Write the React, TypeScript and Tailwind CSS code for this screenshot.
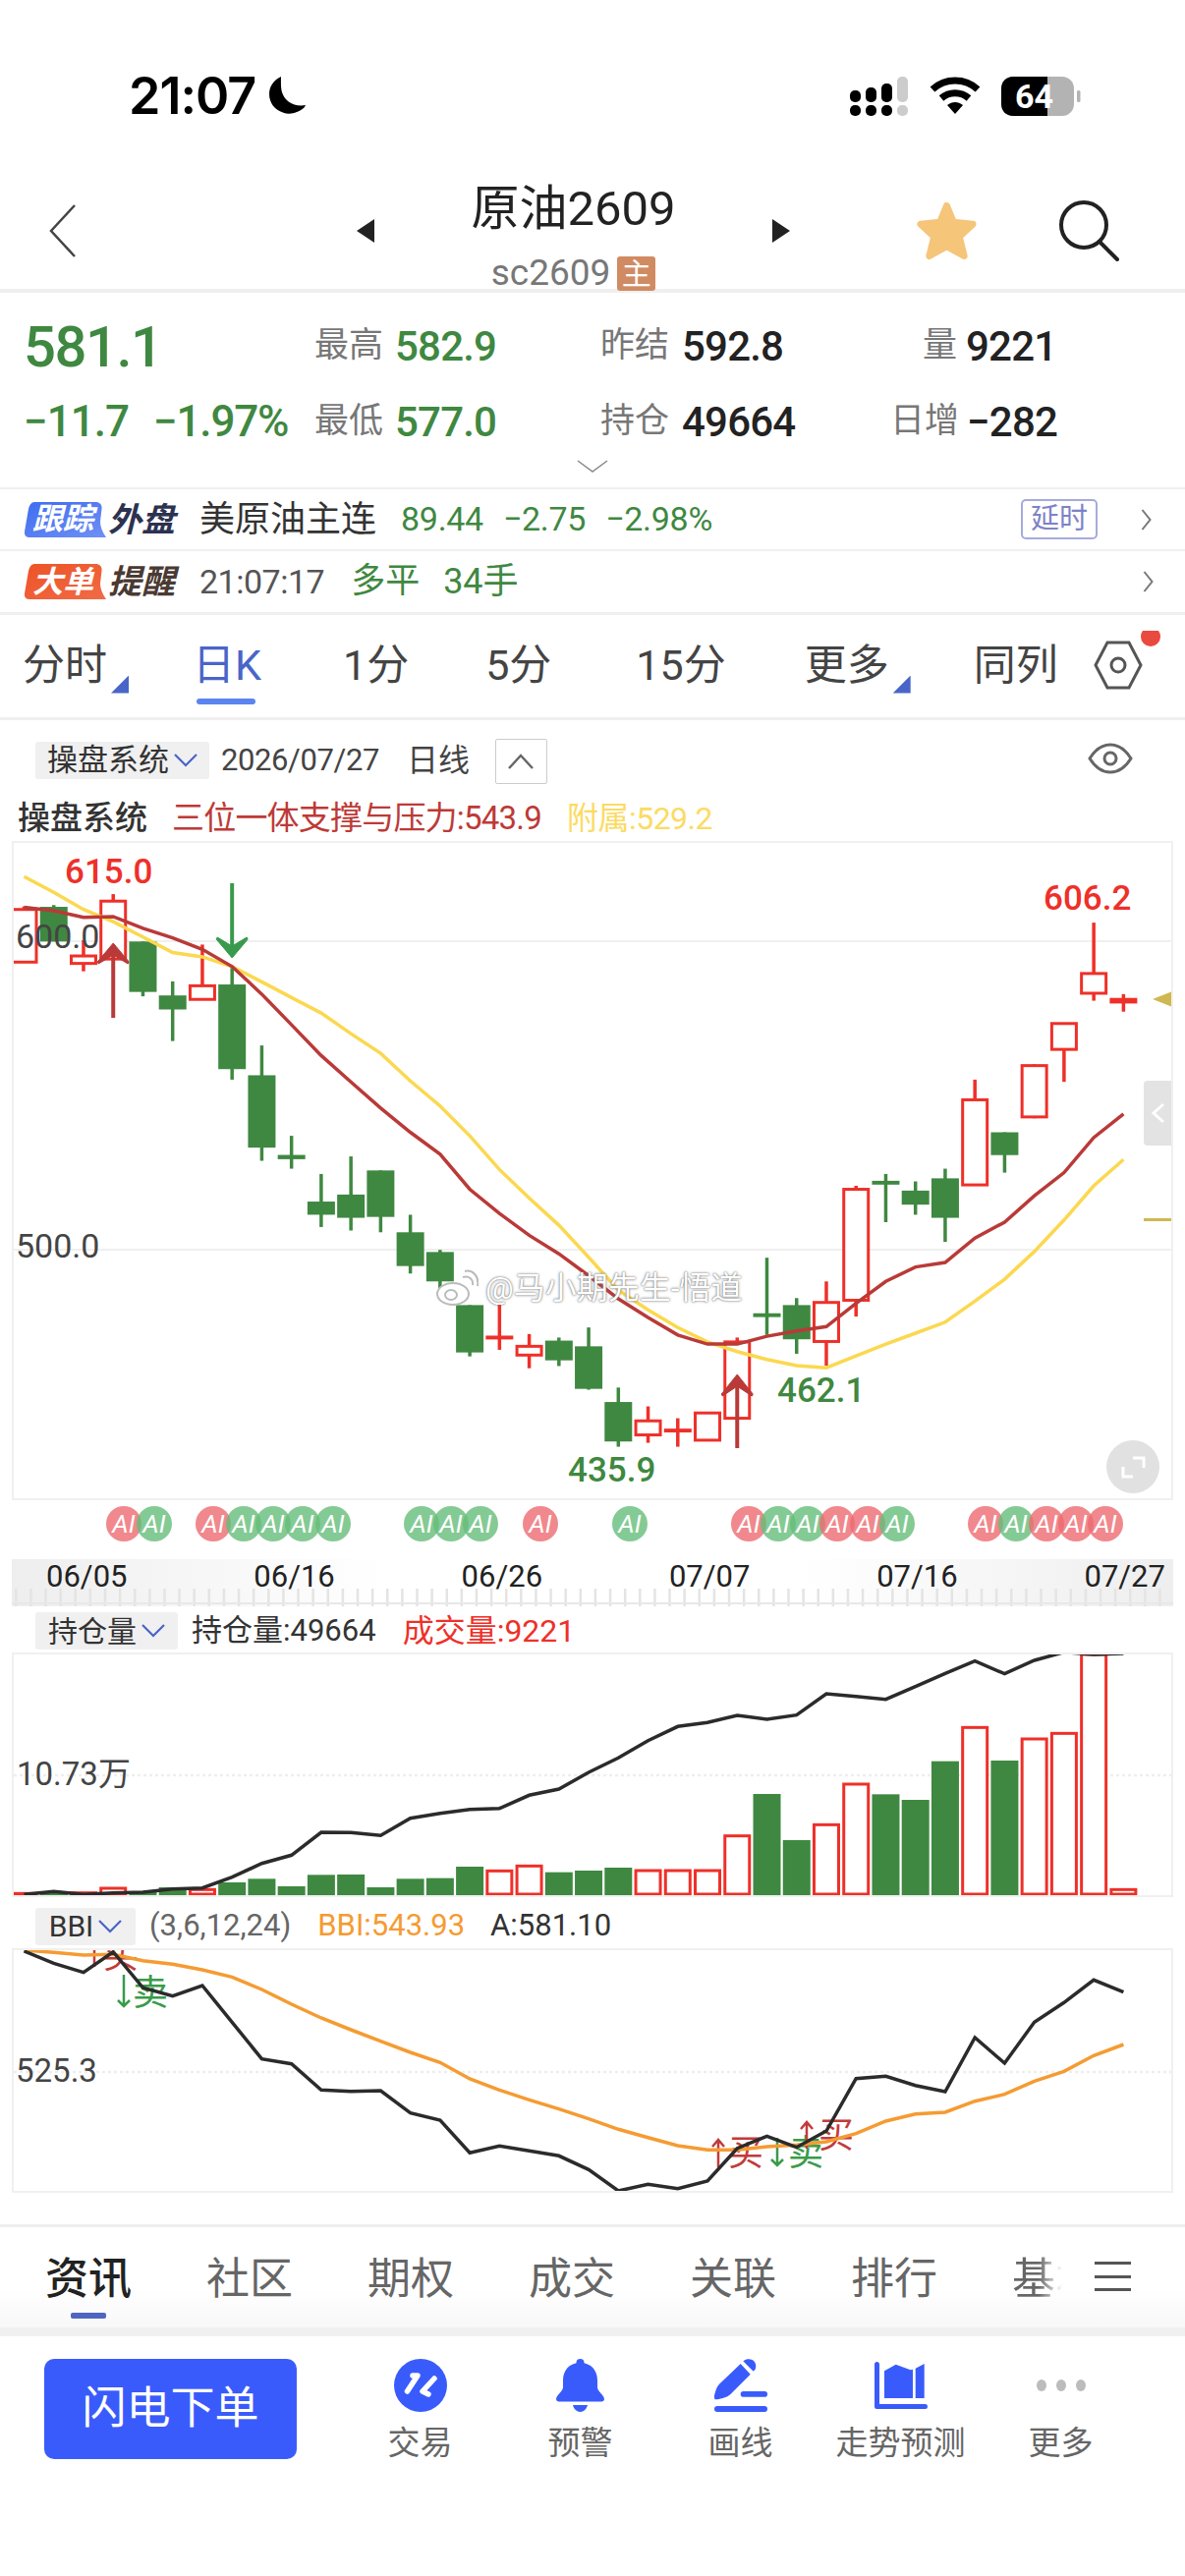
import { ReactNode } from "react";

const RED = "#ee3029";
const GREEN = "#3f8841";

// candle centre on the page
const cx = (i: number) => 24.5 + 30.24 * i;
const py = (v: number) => 840 + v / 2.24;
const vy = (v: number) => 1530 + v / 3;
const by = (v: number) => 1930 + v / 3;

// [high, top, bottom, low, up?]
const candles: [number, number, number, number, boolean][] = [
  [185, 192, 312, 312, true],
  [182, 186, 265, 265, false],
  [262, 298, 315, 333, true],
  [157, 173, 305, 305, true],
  [265, 265, 380, 390, false],
  [356, 388, 420, 492, false],
  [272, 366, 397, 397, true],
  [320, 363, 556, 580, false],
  [502, 570, 735, 765, false],
  [708, 755, 758, 783, false],
  [795, 858, 888, 916, false],
  [755, 842, 895, 924, false],
  [787, 787, 893, 928, false],
  [888, 928, 1005, 1022, false],
  [968, 973, 1040, 1058, false],
  [1094, 1094, 1202, 1211, false],
  [1090, 1167, 1169, 1196, true],
  [1160, 1188, 1208, 1238, true],
  [1168, 1175, 1220, 1233, false],
  [1145, 1188, 1285, 1287, false],
  [1282, 1315, 1405, 1417, false],
  [1325, 1358, 1390, 1408, true],
  [1352, 1379, 1381, 1417, true],
  [1340, 1340, 1402, 1402, true],
  [1168, 1178, 1352, 1352, true],
  [986, 1116, 1118, 1162, false],
  [1078, 1094, 1172, 1205, false],
  [1040, 1088, 1177, 1232, true],
  [822, 830, 1083, 1120, true],
  [795, 814, 816, 905, false],
  [812, 833, 865, 888, false],
  [783, 805, 895, 950, false],
  [580, 626, 820, 822, true],
  [700, 700, 752, 792, false],
  [545, 548, 665, 668, true],
  [452, 452, 511, 585, true],
  [222, 338, 383, 400, true],
  [385, 397, 403, 425, true],
];

const redLine = [187, 195, 210, 208, 235, 257, 283, 322, 385, 455, 525, 585, 645, 700, 750, 830, 885, 935, 977, 1027, 1080, 1122, 1162, 1183, 1183, 1165, 1153, 1143, 1090, 1040, 1007, 997, 941, 905, 845, 792, 712, 658];
const yellowLine = [117, 153, 192, 220, 255, 290, 300, 322, 357, 393, 428, 475, 520, 583, 640, 708, 785, 850, 912, 985, 1060, 1105, 1145, 1178, 1200, 1218, 1232, 1237, 1210, 1183, 1158, 1133, 1085, 1035, 972, 900, 822, 762];
const volTops = [1192, 1188, 1190, 1176, 1185, 1173, 1180, 1158, 1147, 1170, 1135, 1134, 1173, 1147, 1145, 1110, 1123, 1108, 1127, 1122, 1113, 1122, 1122, 1122, 1016, 888, 1029, 982, 858, 889, 906, 788, 685, 786, 720, 703, 462, 1180];
const oiLine = [1195, 1186, 1195, 1190, 1188, 1178, 1175, 1142, 1100, 1075, 1005, 1006, 1015, 962, 947, 935, 932, 892, 873, 822, 778, 725, 682, 670, 648, 660, 647, 582, 590, 599, 560, 520, 482, 521, 480, 455, 462, 459];
const bbiBlack = [168, 205, 233, 170, 280, 305, 273, 385, 497, 512, 592, 596, 594, 662, 684, 784, 763, 778, 793, 835, 900, 880, 893, 870, 770, 733, 767, 717, 557, 550, 578, 597, 432, 510, 385, 325, 256, 293];
const bbiOrange = [165, 172, 180, 178, 197, 208, 225, 247, 285, 330, 372, 408, 443, 477, 508, 558, 592, 622, 650, 680, 712, 737, 762, 775, 775, 765, 760, 750, 725, 687, 665, 660, 626, 605, 565, 535, 487, 453];

const pts = (vals: number[], f: (v: number) => number) =>
  vals.map((v, i) => `${cx(i).toFixed(1)},${f(v).toFixed(1)}`).join(" ");

const aiBadges: [number, boolean][] = [
  [126, true], [157, false], [217, true], [248, false], [278, false], [308, false], [339, false],
  [429, false], [459, false], [489, false], [550, true], [641, false],
  [762, true], [792, false], [822, false], [852, true], [883, true], [913, false],
  [1003, true], [1034, false], [1065, true], [1095, true], [1125, true],
];

const Arrow = ({ x, tail, tip, wing, color }: { x: number; tail: number; tip: number; wing: number; color: string }) => {
  const dir = tail > tip ? 1 : -1;
  return (
    <g fill={color} stroke={color}>
      <line x1={x} y1={tail} x2={x} y2={tip + dir * 4} strokeWidth="4" />
      <path d={`M${x} ${tip}L${x + 16} ${wing}L${x + 15} ${wing + dir * 2}L${x} ${tip + dir * 12}L${x - 15} ${wing + dir * 2}L${x - 16} ${wing}Z`} strokeWidth="1" />
    </g>
  );
};

const Chevron = ({ cls }: { cls: string }) => (
  <svg viewBox="0 0 12 24" className={cls} fill="none" stroke="#777" strokeWidth="2">
    <path d="M2 2L10 12L2 22" />
  </svg>
);

const DownV = () => (
  <svg viewBox="0 0 24 14" className="w-[24px] h-[14px]" fill="none" stroke="#4a63c8" strokeWidth="2.2">
    <path d="M1 1L12 12L23 1" />
  </svg>
);

const Dropdown = ({ label, w, size }: { label: string; w: string; size: string }) => (
  <div className={`h-[38px] ${w} ${size} rounded-[3px] bg-[#f0f0f0] flex items-center justify-center gap-[5px] text-[#333]`}>
    {label}
    <DownV />
  </div>
);

const Tab = ({ children, cls, tri }: { children: ReactNode; cls: string; tri?: boolean }) => (
  <div className={`relative flex items-center text-[43px] leading-none ${cls}`}>
    {children}
    {tri && <div className="absolute right-[-22px] bottom-[-7px] w-[18px] h-[18px] bg-[#4a65c8] [clip-path:polygon(100%_0,100%_100%,0_100%)]" />}
  </div>
);

const Logo = ({ tag, rest, from, to, id, restCls }: { tag: string; rest: string; from: string; to: string; id: string; restCls: string }) => (
  <div className="flex items-center">
    <div className="relative w-[83px] h-[36px] flex items-center justify-center">
      <svg viewBox="0 0 83 36" className="absolute inset-0 w-[83px] h-[36px]">
        <defs>
          <linearGradient id={id} x1="0" y1="0" x2="1" y2="1">
            <stop offset="0" stopColor={from} />
            <stop offset="1" stopColor={to} />
          </linearGradient>
        </defs>
        <path d="M10 0H72C77 0 79 3 78.500 7L77 20C77 25 79 30 83 36H5C1 36 -0.500 33 0 30L4 7C5 3 7 0 10 0Z" fill={`url(#${id})`} />
      </svg>
      <span className="relative pr-[5px] text-[31px] leading-none font-bold italic text-white">{tag}</span>
    </div>
    <span className={`ml-[2px] text-[34px] leading-none font-bold italic ${restCls}`}>{rest}</span>
  </div>
);

const NavItem = ({ icon, label }: { icon: ReactNode; label: string }) => (
  <div className="w-[163px] flex flex-col items-center">
    <div className="h-[54px] flex items-center">{icon}</div>
    <span className="mt-[12px] text-[33px] leading-[40px] text-[#666]">{label}</span>
  </div>
);

const App = () => {
  return (
    <div className="w-[1206px] h-[2622px] bg-white overflow-hidden font-[Roboto,'Noto_Sans_CJK_SC',sans-serif]">
      {/* status bar */}
      <div className="h-[170px] flex items-start pt-[77px] pl-[131px]">
        <span className="text-[52px] leading-[41px] font-semibold text-black tracking-[-1px] font-[Inter,sans-serif]">21:07</span>
        <svg viewBox="0 0 40 40" className="ml-[12px] w-[40px] h-[40px]" fill="#000">
          <path d="M14 1C4 6 0 15 3 25C6 35 19 42 30 37C34 35.500 38 33 39 30C27 32 18 26 15 17C13.500 11 14 5 14 1Z" />
        </svg>
        <svg viewBox="0 0 236 42" className="ml-[552px] w-[236px] h-[42px]">
          <g fill="#000">
            <rect x="1" y="15" width="11" height="12" rx="5" />
            <rect x="17" y="12" width="11" height="15" rx="5" />
            <rect x="33" y="8" width="11" height="19" rx="5" />
            <rect x="1" y="30" width="11" height="11" rx="5" />
            <rect x="17" y="30" width="11" height="11" rx="5" />
            <rect x="33" y="30" width="11" height="11" rx="5" />
          </g>
          <rect x="49" y="1" width="11" height="26" rx="5" fill="#ccc" />
          <rect x="49" y="30" width="11" height="11" rx="5" fill="#ccc" />
          <g fill="none" stroke="#000" strokeWidth="7">
            <path d="M85 14C98 2 118 2 131 14" />
            <path d="M94 23C102 16 114 16 122 23" />
          </g>
          <path d="M100 30C105 26 111 26 116 30L108 39Z" fill="#000" />
          <rect x="155" y="1" width="74" height="40" rx="12" fill="#b3b3b3" />
          <path d="M167 1H202V41H167C160 41 155 36 155 29V13C155 6 160 1 167 1Z" fill="#000" />
          <rect x="232" y="15" width="3.500" height="12" rx="1.500" fill="#b3b3b3" />
          <text x="169" y="33" fontSize="34" fontWeight="700" fill="#fff">64</text>
        </svg>
      </div>

      {/* title bar */}
      <div className="h-[128px] flex items-start border-b-4 border-[#efefef]">
        <svg viewBox="0 0 28 54" className="ml-[50px] mt-[38px] w-[28px] h-[54px]" fill="none" stroke="#444" strokeWidth="2.500">
          <path d="M26 1L2 27L26 53" />
        </svg>
        <svg viewBox="0 0 18 24" className="ml-[285px] mt-[53px] w-[18px] h-[24px]" fill="#222">
          <path d="M18 0V24L0 12Z" />
        </svg>
        <div className="w-[405px] flex flex-col items-center text-[#333]">
          <span className="mt-[18px] text-[49px] leading-[50px] text-[#222]">原油2609</span>
          <div className="mt-[22px] flex items-center">
            <span className="text-[37px] leading-[36px] text-[#777]">sc2609</span>
            <span className="ml-[7px] w-[39px] h-[35px] rounded-[3px] bg-[#d18b62] text-white text-[30px] leading-[35px] text-center">主</span>
          </div>
        </div>
        <svg viewBox="0 0 18 24" className="mt-[53px] w-[18px] h-[24px]" fill="#222">
          <path d="M0 0V24L18 12Z" />
        </svg>
        <svg viewBox="0 0 62 62" className="ml-[129px] mt-[34px] w-[61px] h-[62px]" fill="#f5c579" stroke="#f5c579" strokeWidth="7" strokeLinejoin="round">
          <path d="M31 5L38 22L58 24L44 37L49 57L31 47L13 57L18 37L4 24L24 22Z" />
        </svg>
        <svg viewBox="0 0 62 62" className="ml-[83px] mt-[34px] w-[62px] h-[62px]" fill="none" stroke="#222" strokeWidth="4">
          <circle cx="26" cy="25" r="23" />
          <path d="M42 42L60 60" strokeLinecap="round" />
        </svg>
      </div>

      {/* quote block */}
      <div className="relative h-[198px] pl-[24px]">
        <div className="h-[106px] pt-[3px] flex items-center">
          <span className="w-[296px] text-[58px] leading-none font-medium text-[#3f8841] tracking-[-1.500px]">581.1</span>
          <span className="w-[82px] text-[35px] text-[#777]">最高</span>
          <span className="w-[209px] text-[42px] font-medium text-[#3f8841] tracking-[-0.800px]">582.9</span>
          <span className="w-[83px] text-[35px] text-[#777]">昨结</span>
          <span className="w-[245px] text-[42px] font-medium text-[#222] tracking-[-0.800px]">592.8</span>
          <span className="w-[44px] text-[35px] text-[#777]">量</span>
          <span className="text-[42px] font-medium text-[#222] tracking-[-0.800px]">9221</span>
        </div>
        <div className="h-[50px] flex items-center">
          <span className="w-[132px] text-[44px] font-medium text-[#3f8841] tracking-[-1px]">−11.7</span>
          <span className="w-[164px] text-[44px] font-medium text-[#3f8841] tracking-[-1.200px]">−1.97%</span>
          <span className="w-[82px] text-[35px] text-[#777]">最低</span>
          <span className="w-[209px] text-[42px] font-medium text-[#3f8841] tracking-[-0.800px]">577.0</span>
          <span className="w-[83px] text-[35px] text-[#777]">持仓</span>
          <span className="w-[212px] text-[42px] font-medium text-[#222] tracking-[-0.800px]">49664</span>
          <span className="w-[78px] text-[35px] text-[#777]">日增</span>
          <span className="text-[42px] font-medium text-[#222] tracking-[-0.800px]">−282</span>
        </div>
        <svg viewBox="0 0 32 14" className="absolute left-[587px] top-[170px] w-[32px] h-[14px]" fill="none" stroke="#888" strokeWidth="1.500">
          <path d="M1 1L16 12L31 1" />
        </svg>
      </div>

      {/* follow rows */}
      <div className="h-[63px] border-t-2 border-[#f0f0f0] flex items-center pl-[25px]">
        <Logo tag="跟踪" rest="外盘" from="#3f6cf0" to="#6f90f5" id="gFollow" restCls="text-[#2c3250]" />
        <span className="ml-[25px] text-[36px] text-[#333]">美原油主连</span>
        <span className="ml-[25px] text-[34px] text-[#3f8841] tracking-[-0.300px]">89.44</span>
        <span className="ml-[20px] text-[34px] text-[#3f8841] tracking-[-0.300px]">−2.75</span>
        <span className="ml-[20px] text-[34px] text-[#3f8841] tracking-[-0.300px]">−2.98%</span>
        <div className="ml-[314px] w-[78px] h-[41px] rounded-[5px] border-2 border-[#a6abdc] text-[#7d82c8] text-[29px] leading-[37px] text-center">延时</div>
        <Chevron cls="ml-[43px] w-[13px] h-[24px]" />
      </div>
      <div className="h-[64px] border-t-2 border-[#f0f0f0] flex items-center pl-[25px]">
        <Logo tag="大单" rest="提醒" from="#ed5327" to="#f16b46" id="gAlert" restCls="text-[#4a3a33]" />
        <span className="ml-[25px] text-[34px] text-[#555] tracking-[-0.500px]">21:07:17</span>
        <span className="ml-[27px] text-[35px] text-[#3f8841]">多平</span>
        <span className="ml-[24px] text-[36px] text-[#3f8841]">34手</span>
        <Chevron cls="ml-[634px] w-[13px] h-[24px]" />
      </div>

      {/* period tabs */}
      <div className="relative h-[110px] border-t-[3px] border-b-[3px] border-[#f0f0f0] flex items-center pl-[23px] pb-[2px] text-[#444]">
        <Tab cls="" tri>分时</Tab>
        <Tab cls="ml-[87px] text-[#4a65c8]">日K</Tab>
        <Tab cls="ml-[83px]">1分</Tab>
        <Tab cls="ml-[78px]">5分</Tab>
        <Tab cls="ml-[86px]">15分</Tab>
        <Tab cls="ml-[80px]" tri>更多</Tab>
        <Tab cls="ml-[86px]">同列</Tab>
        <svg viewBox="0 0 72 70" className="ml-[35px] w-[72px] h-[70px]" fill="none" stroke="#555" strokeWidth="3">
          <path d="M15 12H37L49 35L37 58H15L3 35Z" />
          <circle cx="26" cy="35" r="7" />
          <circle cx="59" cy="6" r="10" fill="#e9493f" stroke="none" />
        </svg>
        <div className="absolute left-[200px] top-[85px] w-[60px] h-[6px] rounded-[3px] bg-[#5b84f0]" />
      </div>

      {/* chart toolbar */}
      <div className="h-[60px] flex items-end pl-[36px] gap-[12px] text-[#444]">
        <Dropdown label="操盘系统" w="w-[177px]" size="text-[31px]" />
        <span className="text-[31px] leading-[38px] tracking-[-0.400px]">2026/07/27</span>
        <span className="ml-[16px] text-[32px] leading-[38px]">日线</span>
        <div className="ml-[14px] mb-[-5px] w-[53px] h-[46px] border border-[#ccc] rounded-[2px] flex items-center justify-center">
          <svg viewBox="0 0 26 16" className="w-[26px] h-[16px]" fill="none" stroke="#666" strokeWidth="2.500">
            <path d="M1 15L13 2L25 15" />
          </svg>
        </div>
        <svg viewBox="0 0 46 32" className="ml-[538px] mb-[5px] w-[46px] h-[32px]" fill="none" stroke="#666" strokeWidth="3">
          <path d="M2 16C7 8 14 2 23 2C32 2 39 8 44 16C39 24 32 30 23 30C14 30 7 24 2 16Z" />
          <circle cx="23" cy="16" r="6" />
        </svg>
      </div>

      {/* indicator legend */}
      <div className="h-[63px] flex items-center pl-[18px] pt-[16px] text-[33px]">
        <span className="text-[#333] font-medium">操盘系统</span>
        <span className="ml-[25px] text-[#bd3a37] tracking-[-0.800px]">三位一体支撑与压力:543.9</span>
        <span className="ml-[26px] text-[32px] text-[#fbdb63] tracking-[-0.500px]">附属:529.2</span>
      </div>

      {/* price chart */}
      <div className="relative ml-[12px] w-[1182px] h-[671px] border-2 border-[#f0f0f0] overflow-hidden">
        <svg viewBox="14 858 1178 667" className="block w-[1178px] h-[667px]">
          <line x1="12" x2="1194" y1="958" y2="958" stroke="#f0f0f0" strokeWidth="2" />
          <line x1="12" x2="1194" y1="1272" y2="1272" stroke="#f0f0f0" strokeWidth="2" />
          {candles.map(([hi, top, bot, lo, up], i) => {
            const c = up ? RED : GREEN;
            const x = cx(i);
            const doji = bot - top < 8;
            return (
              <g key={i}>
                <line x1={x} x2={x} y1={py(hi)} y2={py(lo)} stroke={c} strokeWidth="3.500" />
                {doji ? (
                  <rect x={x - 14} y={py(top) - 1.500} width="28" height={Math.max(3, py(bot) - py(top) + 3)} fill={c} />
                ) : up ? (
                  <rect x={x - 12.500} y={py(top)} width="25" height={py(bot) - py(top)} fill="#fff" stroke={c} strokeWidth="3" />
                ) : (
                  <rect x={x - 14} y={py(top)} width="28" height={py(bot) - py(top)} fill={c} />
                )}
              </g>
            );
          })}
          <polyline points={pts(yellowLine, py)} fill="none" stroke="#fbd84f" strokeWidth="3.500" />
          <polyline points={pts(redLine, py)} fill="none" stroke="#b93a38" strokeWidth="3.500" />
          <Arrow x={cx(3)} tail={1036} tip={960} wing={979} color="#b93a38" />
          <Arrow x={cx(7)} tail={899} tip={975} wing={956} color="#3a9a4c" />
          <Arrow x={cx(24)} tail={1474} tip={1399} wing={1419} color="#b93a38" />
          <g fontSize="35" fontWeight="500">
            <text x="16" y="965" fontSize="34" fontWeight="400" fill="#444">600.0</text>
            <text x="16" y="1280" fontSize="34" fontWeight="400" fill="#444">500.0</text>
            <text x="66" y="899" fill={RED}>615.0</text>
            <text x="1062" y="926" fill={RED}>606.2</text>
            <text x="578" y="1508" fill={GREEN}>435.9</text>
            <text x="791" y="1427" fill={GREEN}>462.1</text>
          </g>
          <path d="M1193 1009V1025L1173 1017Z" fill="#cfb851" />
          <rect x="1164" y="1240" width="28" height="3" fill="#cfb851" />
          <path d="M1194 1100H1168Q1164 1100 1164 1104V1162Q1164 1166 1168 1166H1194Z" fill="#e3e3e3" />
          <path d="M1184 1124L1174 1133L1184 1142" fill="none" stroke="#fff" strokeWidth="3" />
          <ellipse cx="1153" cy="1493" rx="27" ry="27" fill="#e1e1e1" />
          <path d="M1153 1484H1164V1494M1153 1503H1143V1493" fill="none" stroke="#fff" strokeWidth="3" />
        </svg>
        {/* watermark */}
        <div className="absolute left-[429px] top-[433px] flex items-center gap-[7px] text-[32px] leading-[40px] text-white [text-shadow:0_0_3px_#777,0_0_1px_#777]">
          <svg viewBox="0 0 44 38" className="w-[44px] h-[38px]" fill="#fff" stroke="#bbb" strokeWidth="2">
            <ellipse cx="18" cy="25" rx="16" ry="11" />
            <ellipse cx="16" cy="26" rx="6" ry="5" fill="none" />
            <path d="M28 8C34 6 39 10 38 16M30 2C38 0 45 7 43 17" fill="none" />
          </svg>
          <span>@马小期先生-悟道</span>
        </div>
      </div>

      {/* AI markers */}
      <svg viewBox="0 1528 1206 46" className="block w-[1206px] h-[46px]">
        {aiBadges.map(([x, up], i) => (
          <g key={i}>
            <circle cx={x} cy="1552" r="18" fill={up ? "#ec6a70" : "#65bd7a"} opacity="0.8" />
            <text x={x} y="1561" textAnchor="middle" fontSize="26" fontStyle="italic" fill="#fff">AI</text>
          </g>
        ))}
      </svg>

      {/* date axis */}
      <div className="relative ml-[12px] mt-[14px] w-[1182px] h-[48px] bg-[linear-gradient(90deg,#eeeeee_0%,#ffffff_32%,#ffffff_68%,#eeeeee_100%)] flex justify-between pl-[35px] pr-[8px] text-[31px] leading-[36px] text-[#222]">
        <span>06/05</span>
        <span>06/16</span>
        <span>06/26</span>
        <span>07/07</span>
        <span>07/16</span>
        <span>07/27</span>
        <svg viewBox="0 0 1182 18" className="absolute left-0 bottom-0 w-[1182px] h-[18px]">
          {Array.from({ length: 78 }, (_, i) => (
            <rect key={i} x={3 + i * 15.12} y="0" width="2.500" height="18" fill="#e4e4e4" />
          ))}
          <rect x="0" y="14" width="1182" height="2" fill="#e8e8e8" />
        </svg>
      </div>

      {/* open interest */}
      <div className="h-[47px] flex items-center pl-[36px] pt-[3px]">
        <Dropdown label="持仓量" w="w-[145px]" size="text-[30px]" />
        <span className="ml-[14px] text-[31px] text-[#333]">持仓量:49664</span>
        <span className="ml-[27px] text-[32px] text-[#ee3029]">成交量:9221</span>
      </div>
      <div className="ml-[12px] w-[1182px] h-[249px] border-2 border-[#f0f0f0] overflow-hidden">
        <svg viewBox="14 1684 1178 245" className="block w-[1178px] h-[245px]">
          <line x1="14" x2="1192" y1="1807" y2="1807" stroke="#eee" strokeWidth="2.500" strokeDasharray="3 3" />
          {volTops.map((t, i) => {
            const x = cx(i);
            const up = candles[i][4];
            return up ? (
              <rect key={i} x={x - 12.500} y={vy(t)} width="25" height={1928 - vy(t)} fill="#fff" stroke={RED} strokeWidth="3" />
            ) : (
              <rect key={i} x={x - 14} y={vy(t)} width="28" height={1929.500 - vy(t)} fill={GREEN} />
            );
          })}
          <polyline points={pts(oiLine, vy)} fill="none" stroke="#2b2b2b" strokeWidth="3.500" />
          <text x="17" y="1817" fontSize="33" fill="#444">10.73万</text>
        </svg>
      </div>

      {/* BBI */}
      <div className="h-[52px] flex items-center pl-[36px] pt-[7px] text-[31px]">
        <Dropdown label="BBI" w="w-[102px]" size="text-[30px]" />
        <span className="ml-[14px] text-[#666]">(3,6,12,24)</span>
        <span className="ml-[27px] text-[#f59b32]">BBI:543.93</span>
        <span className="ml-[26px] text-[#333]">A:581.10</span>
      </div>
      <div className="ml-[12px] w-[1182px] h-[249px] border-2 border-[#f0f0f0] overflow-hidden">
        <svg viewBox="14 1985 1178 245" className="block w-[1178px] h-[245px]">
          <line x1="14" x2="1192" y1="2109" y2="2109" stroke="#eee" strokeWidth="2.500" strokeDasharray="3 3" />
          <g fontSize="36">
            <text x="105" y="2003" fill="#c23b3b">买</text>
            <text x="135" y="2041" fill="#3a9b4b">卖</text>
            <text x="741" y="2204" fill="#c23b3b">买</text>
            <text x="802" y="2204" fill="#3a9b4b">卖</text>
            <text x="833" y="2186" fill="#c23b3b">买</text>
          </g>
          <g fill="none" strokeWidth="2.500">
            <path d="M96 2002V1975M90 1982L96 1975L102 1982" stroke="#c23b3b" />
            <path d="M126 2010V2042M120 2036L126 2042L132 2036" stroke="#3a9b4b" />
            <path d="M731 2206V2178M725 2185L731 2178L737 2185" stroke="#c23b3b" />
            <path d="M791 2176V2204M785 2198L791 2204L797 2198" stroke="#3a9b4b" />
            <path d="M821 2187V2160M815 2167L821 2160L827 2167" stroke="#c23b3b" />
          </g>
          <polyline points={pts(bbiOrange, by)} fill="none" stroke="#f59b32" strokeWidth="3.500" />
          <polyline points={pts(bbiBlack, by)} fill="none" stroke="#2b2b2b" strokeWidth="3.500" />
          <text x="16" y="2119" fontSize="33" fill="#444">525.3</text>
        </svg>
      </div>

      {/* news tabs */}
      <div className="mt-[32px] relative h-[105px] border-t-[3px] border-[#eeeeee] bg-[linear-gradient(180deg,#ffffff_60%,#f8f8f8_100%)] flex items-center pl-[46px] pt-[3px] text-[44px] text-[#666]">
        <span className="font-medium text-[#222]">资讯</span>
        <span className="ml-[76px]">社区</span>
        <span className="ml-[76px]">期权</span>
        <span className="ml-[76px]">成交</span>
        <span className="ml-[76px]">关联</span>
        <span className="ml-[76px]">排行</span>
        <span className="ml-[76px] w-[60px] overflow-hidden whitespace-nowrap bg-[linear-gradient(90deg,#666_45%,#ffffff_85%)] bg-clip-text text-transparent">基本</span>
        <div className="ml-[24px] mb-[5px] w-[37px] h-[30px] flex flex-col justify-between">
          <div className="h-[3px] bg-[#555]" />
          <div className="h-[3px] bg-[#555]" />
          <div className="h-[3px] bg-[#555]" />
        </div>
        <div className="absolute left-[72px] top-[87px] w-[36px] h-[6px] rounded-[2px] bg-[#4f66c0]" />
      </div>

      {/* bottom bar */}
      <div className="border-t-[9px] border-[#f0f0f0] pt-[23px] flex items-start pl-[45px]">
        <div className="w-[257px] h-[102px] rounded-[10px] bg-[#3a5bfb] text-white text-[45px] flex items-center justify-center">闪电下单</div>
        <div className="ml-[44px] flex">
          <NavItem
            label="交易"
            icon={
              <svg viewBox="0 0 54 54" className="w-[54px] h-[54px]">
                <circle cx="27" cy="27" r="27" fill="#3a5bfb" />
                <path d="M19 17H24L13.500 33" stroke="#fff" strokeWidth="5.500" strokeLinecap="round" strokeLinejoin="round" fill="none" />
                <path d="M41 20L29 33L35 36" stroke="#fff" strokeWidth="5.500" strokeLinecap="round" strokeLinejoin="round" fill="none" />
              </svg>
            }
          />
          <NavItem
            label="预警"
            icon={
              <svg viewBox="0 0 49 54" className="w-[49px] h-[54px]" fill="#3a5bfb">
                <circle cx="24.500" cy="4" r="4" />
                <path d="M24.500 4C36 4 42 12 42 22V29C42 33 49 37 49 41C49 43 47 43.500 45 43.500H4C2 43.500 0 43 0 41C0 37 7 33 7 29V22C7 12 13 4 24.500 4Z" />
                <path d="M17 47H32C31 51 28 54 24.500 54C21 54 18 51 17 47Z" />
              </svg>
            }
          />
          <NavItem
            label="画线"
            icon={
              <svg viewBox="0 0 54 54" className="w-[54px] h-[54px]" fill="#3a5bfb">
                <path d="M29.300 2.300C33 -1 38 0 40 2C43 5 43 10 40 12.300L39.500 12.600Z" />
                <path d="M26.700 5L36.700 15.700L16.700 35.700C12 40 5 41 1 41.300C0 41 -0.300 38 0 37.300C1 33 2 29 5 25.700Z" />
                <rect x="26.700" y="33" width="27.300" height="5.700" rx="2.800" />
                <rect x="0" y="48" width="54" height="6" rx="3" />
              </svg>
            }
          />
          <NavItem
            label="走势预测"
            icon={
              <svg viewBox="0 0 54 48" className="w-[54px] h-[48px]" fill="#3a5bfb">
                <path d="M2.500 2.500V45.500H51.500" fill="none" stroke="#3a5bfb" strokeWidth="5" strokeLinecap="round" strokeLinejoin="round" />
                <path d="M10 9.300L21.700 2.700L36.700 8.300L39 7.700V37H10Z" />
                <path d="M41.700 6.700L50.700 2V37H41.700Z" />
              </svg>
            }
          />
          <NavItem
            label="更多"
            icon={
              <svg viewBox="0 0 50 14" className="w-[50px] h-[14px]" fill="#bcbcbc">
                <ellipse cx="5" cy="7" rx="5" ry="6" />
                <ellipse cx="25" cy="7" rx="5" ry="6" />
                <ellipse cx="45" cy="7" rx="5" ry="6" />
              </svg>
            }
          />
        </div>
      </div>
    </div>
  );
};

export default App;
